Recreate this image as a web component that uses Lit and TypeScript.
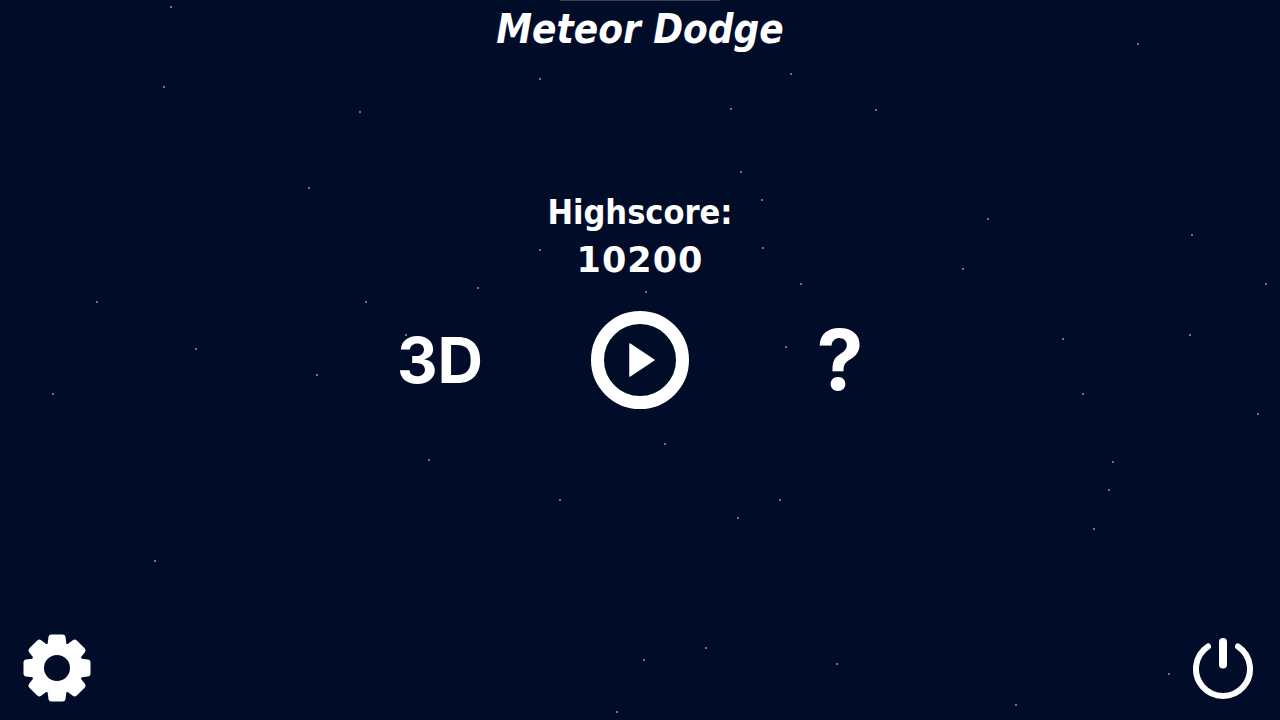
import { LitElement, html, css, svg } from "lit";
import { customElement } from "lit/decorators.js";

const STARS: [number, number][] = [
  [171,7],[164,87],[360,112],[309,188],[97,302],[196,349],[53,394],[366,302],[317,375],[406,335],[429,460],
  [1138,44],[876,110],[988,219],[1192,235],[963,269],[1266,284],[1063,339],[1190,335],[1083,394],[1258,414],[1113,462],
  [665,444],[560,500],[780,500],[738,518],[706,648],[644,660],[837,664],[617,712],
  [540,79],[791,74],[731,109],[741,172],[762,200],[540,250],[763,248],[646,292],[478,288],[801,284],[786,347],
  [1109,490],[1094,529],[155,561],[1169,674],[1016,705],
];

function gearPath(): string {
  const cx = 34, cy = 34;
  const pts: string[] = [];
  const n = 8;
  const rOut = 31, rIn = 23.5;
  for (let i = 0; i < n; i++) {
    const a = (i * 2 * Math.PI) / n - Math.PI / 2;
    const step = Math.PI / n;
    const at = (r: number, t: number) =>
      `${(cx + r * Math.cos(a + t)).toFixed(2)} ${(cy + r * Math.sin(a + t)).toFixed(2)}`;
    pts.push(at(rIn, -step * 0.72), at(rOut, -step * 0.46), at(rOut, step * 0.46), at(rIn, step * 0.72));
  }
  return `M${pts.join("L")}Z`;
}

@customElement("app-root")
export class AppRoot extends LitElement {
  static styles = css`
    :host {
      display: block;
      width: 1280px;
      height: 720px;
      overflow: hidden;
      position: relative;
      background: #010c29;
      color: #fff;
      font-family: "Liberation Sans", sans-serif;
    }
    .stars { position: absolute; inset: 0; }
    .star {
      position: absolute;
      width: 2px;
      height: 2px;
      border-radius: 50%;
      background: #8f97ab;
    }
    .page {
      position: relative;
      height: 720px;
      display: flex;
      flex-direction: column;
      align-items: center;
      box-sizing: border-box;
    }
    .topline { width: 160px; height: 1px; background: #3a4154; flex: none; }
    .title {
      margin-top: 5px;
      font-family: "DejaVu Sans", sans-serif;
      font-stretch: condensed;
      font-size: 40px;
      line-height: 46px;
      font-weight: 700;
      font-style: italic;
      white-space: nowrap;
    }
    .score {
      margin-top: 137px;
      display: flex;
      flex-direction: column;
      align-items: center;
      gap: 2px;
      font-family: "DejaVu Sans", sans-serif;
      font-weight: 700;
      line-height: 46px;
    }
    .label { font-size: 34px; font-stretch: condensed; }
    .value { font-size: 35px; letter-spacing: 1px; }
    .actions {
      margin-top: 28px;
      width: 600px;
      display: grid;
      grid-template-columns: repeat(3, 200px);
      justify-items: center;
      align-items: center;
      height: 98px;
    }
    .text-btn { font-family: Inter, sans-serif; font-weight: 700; line-height: 1; }
    .three { font-size: 63px; }
    .help { font-size: 84px; }
    .play {
      width: 98px;
      height: 98px;
      box-sizing: border-box;
      border: 13px solid #fff;
      border-radius: 50%;
      display: flex;
      align-items: center;
      justify-content: center;
      padding-left: 4px;
    }
    .bottom {
      margin-top: auto;
      align-self: stretch;
      display: flex;
      justify-content: space-between;
      align-items: flex-end;
      padding: 0 26px 18px 23px;
    }
    .power { margin-bottom: 2px; }
    svg { display: block; }
  `;

  render() {
    return html`
      <div class="stars">
        ${STARS.map(([x, y]) => html`<i class="star" style="left:${x - 1}px;top:${y - 1}px"></i>`)}
      </div>
      <div class="page">
        <div class="topline"></div>
        <div class="title">Meteor Dodge</div>
        <div class="score"><span class="label">Highscore:</span><span class="value">10200</span></div>
        <div class="actions">
          <div class="text-btn three">3D</div>
          <div class="play">
            <svg width="26" height="34" viewBox="0 0 26 34">
              <path d="M1 1L25 17L1 33Z" fill="#fff" stroke="#fff" stroke-width="1.5" stroke-linejoin="round"></path>
            </svg>
          </div>
          <div class="text-btn help">?</div>
        </div>
        <div class="bottom">
          <svg width="68" height="68" viewBox="0 0 68 68">
            <path d=${gearPath()} fill="#fff" stroke="#fff" stroke-width="6" stroke-linejoin="round"></path>
            <circle cx="34" cy="34" r="13" fill="#010c29"></circle>
          </svg>
          <svg class="power" width="62" height="62" viewBox="0 0 62 62">
            ${svg`<path d="M16 8.5A27 27 0 1 0 46 8.5" fill="none" stroke="#fff" stroke-width="6" stroke-linecap="round"></path>
            <path d="M31 4V26.5" fill="none" stroke="#fff" stroke-width="8" stroke-linecap="round"></path>`}
          </svg>
        </div>
      </div>
    `;
  }
}
